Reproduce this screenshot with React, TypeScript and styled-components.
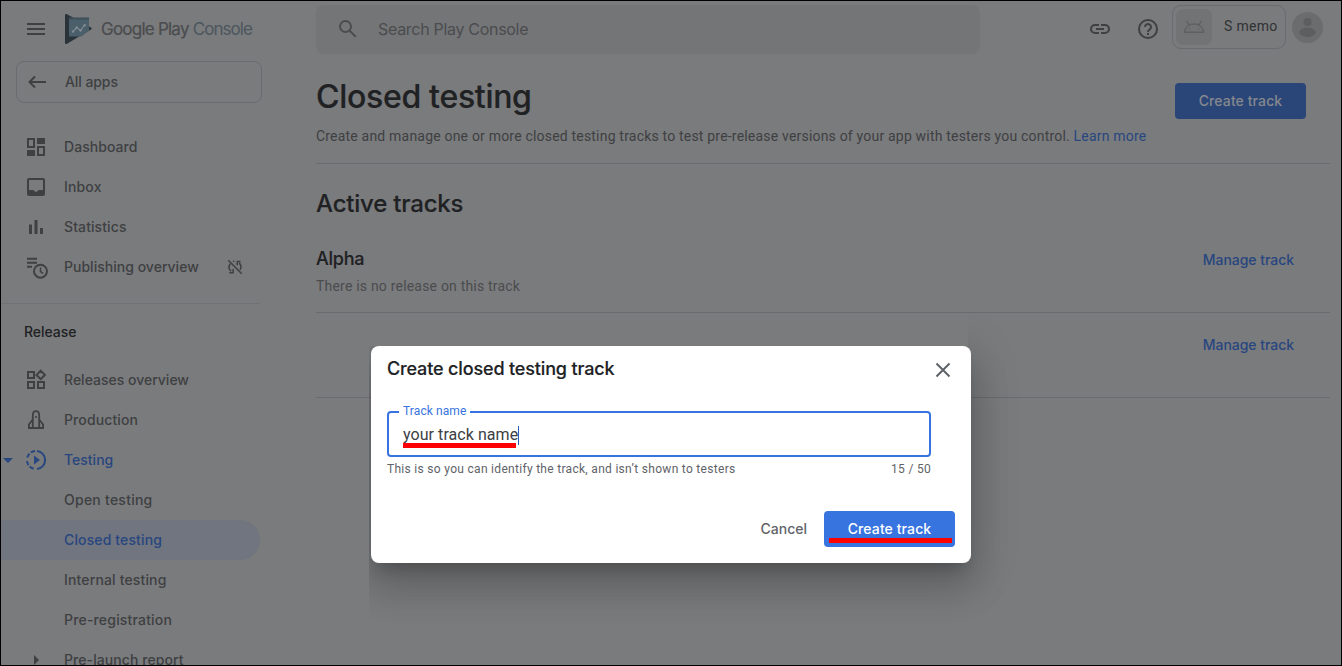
import React from "react";
import styled, { createGlobalStyle, ThemeProvider } from "styled-components";

const theme = {
  page: "#7a7b7d",
  field: "#747577",
  line: "#6a6b6e",
  text: "#3e4042",
  muted: "#4a4c4e",
  ink: "#202123",
  blue: "#28467f",
  button: "#2a4678",
  selected: "#71757f",
  accent: "#3774e0",
};

const sans = `Inter, "Liberation Sans", sans-serif`;
const roboto = `Roboto, "Liberation Sans", sans-serif`;

const GlobalStyle = createGlobalStyle`
  *, *::before, *::after { box-sizing: border-box; }
  body { margin: 0; }
  button { border: 0; padding: 0; background: none; }
  h1, h2, h3, p { margin: 0; }
`;

const Frame = styled.div`
  position: relative;
  display: flex;
  width: 1342px;
  height: 666px;
  overflow: hidden;
  border: 1px solid #000;
  background: ${(p) => p.theme.page};
  color: ${(p) => p.theme.text};
  font: 500 14px/20px ${sans};
  white-space: nowrap;
`;

/* Sidebar */
const Sidebar = styled.aside`
  display: flex;
  flex-direction: column;
  flex: none;
  width: 315px;
`;

const Brand = styled.div`
  display: flex;
  align-items: center;
  flex: none;
  height: 56px;
  padding-left: 23px;
  svg { flex: none; }
`;

const Logo = styled.svg`
  margin: 0 9px 0 16px;
`;

const BrandName = styled.span`
  font-weight: 400;
  font-size: 17px;
  letter-spacing: -0.77px;
  color: #4a4c4e;
  -webkit-text-stroke: 0.2px;
`;

const BrandSuffix = styled.span`
  margin-left: 4px;
  letter-spacing: -0.95px;
  color: #4c565d;
  -webkit-text-stroke: 0;
`;

const AllApps = styled.button`
  display: flex;
  align-items: center;
  flex: none;
  gap: 15px;
  width: 246px;
  height: 42px;
  margin: 4px 0 24px 15px;
  padding-left: 9px;
  border: 1px solid ${(p) => p.theme.line};
  border-radius: 8px;
  color: ${(p) => p.theme.text};
  font: 500 14px/20px ${sans};
  letter-spacing: -0.08px;
`;

const NavItem = styled.a<{ $tone?: "blue"; $selected?: boolean; $spacing?: number }>`
  display: flex;
  align-items: center;
  flex: none;
  width: 259px;
  height: 40px;
  border-radius: 0 20px 20px 0;
  background: ${(p) => (p.$selected ? p.theme.selected : "transparent")};
  color: ${(p) => (p.$tone === "blue" ? p.theme.blue : p.theme.text)};
  letter-spacing: ${(p) => p.$spacing ?? 0.1}px;
`;

const Caret = styled.span`
  display: flex;
  width: 14px;
  justify-content: center;
`;

const IconSlot = styled.span`
  display: flex;
  width: 42px;
  align-items: center;
  justify-content: center;
  margin-right: 7px;
`;

const Trailing = styled.span`
  display: flex;
  margin-left: auto;
  margin-right: 16px;
`;

const NavDivider = styled.div`
  flex: none;
  width: 259px;
  height: 1px;
  margin: 16px 0 18px;
  background: #707174;
`;

const NavHeading = styled.h3`
  flex: none;
  height: 38px;
  padding-left: 23px;
  color: ${(p) => p.theme.ink};
  font: 500 14px/20px ${sans};
  letter-spacing: -0.05px;
`;

/* Main column */
const Main = styled.main`
  display: flex;
  flex-direction: column;
  flex: none;
  width: 1014px;
`;

const TopBar = styled.header`
  display: flex;
  flex: none;
  height: 53px;
  padding-top: 4px;
`;

const SearchBox = styled.div`
  display: flex;
  align-items: center;
  gap: 18px;
  width: 664px;
  height: 49px;
  padding: 0 0 2px 20px;
  border-radius: 8px;
  background: ${(p) => p.theme.field};
  color: ${(p) => p.theme.muted};
  font: 400 16px/24px ${sans};
  letter-spacing: -0.3px;
`;

const Actions = styled.div`
  display: flex;
  height: 44px;
  margin-left: auto;
  align-items: center;
`;

const ActionIcon = styled.span`
  display: flex;
  width: 48px;
  justify-content: center;
  padding-top: 4px;
`;

const AppChip = styled.div`
  display: flex;
  align-items: center;
  width: 114px;
  height: 44px;
  padding-left: 3px;
  border: 1px solid ${(p) => p.theme.line};
  border-radius: 9px;
  color: #303234;
  font: 400 14px/20px ${roboto};
  letter-spacing: 0.3px;
`;

const AppTile = styled.span`
  display: flex;
  align-items: center;
  justify-content: center;
  width: 36px;
  height: 36px;
  margin-right: 12px;
  border-radius: 7px;
  background: #727375;
`;

const AppName = styled.span`
  padding-bottom: 2px;
`;

const Avatar = styled.svg`
  margin: 0 7px 0 6px;
`;

const PageHead = styled.section`
  display: flex;
  align-items: flex-start;
  justify-content: space-between;
  flex: none;
  height: 110px;
  padding: 20px 24px 0 0;
  border-bottom: 1px solid ${(p) => p.theme.line};
`;

const Title = styled.h1`
  padding-top: 1px;
  color: ${(p) => p.theme.ink};
  font: 500 32px/44px ${sans};
  letter-spacing: -0.3px;
  -webkit-text-stroke: 0.2px;
`;

const Description = styled.p`
  margin-top: 7px;
  color: ${(p) => p.theme.text};
  font: 400 14px/20px ${roboto};
  letter-spacing: 0.196px;
`;

const Link = styled.a`
  color: ${(p) => p.theme.blue};
`;

const PrimaryButton = styled.button<{ $dimmed?: boolean }>`
  display: flex;
  align-items: center;
  justify-content: center;
  position: relative;
  width: 131px;
  height: 36px;
  margin-top: ${(p) => (p.$dimmed ? 9 : 0)}px;
  border-radius: 4px;
  background: ${(p) => (p.$dimmed ? p.theme.button : p.theme.accent)};
  color: ${(p) => (p.$dimmed ? "#85888d" : "#fff")};
  font: 500 14px/20px ${sans};
  letter-spacing: 0.1px;
`;

const SectionTitle = styled.h2`
  flex: none;
  padding: 22px 0 19px;
  color: ${(p) => p.theme.ink};
  font: 500 24px/36px ${sans};
  letter-spacing: -0.2px;
  -webkit-text-stroke: 0.15px;
`;

const TrackRow = styled.article<{ $height: number; $top: number }>`
  display: flex;
  justify-content: space-between;
  flex: none;
  height: ${(p) => p.$height}px;
  padding: ${(p) => p.$top}px 36px 0 0;
  border-bottom: 1px solid ${(p) => p.theme.line};
`;

const TrackName = styled.h3`
  color: ${(p) => p.theme.ink};
  font: 500 18px/24px ${sans};
  letter-spacing: -0.25px;
  -webkit-text-stroke: 0.15px;
`;

const TrackStatus = styled.p`
  margin-top: 5px;
  color: ${(p) => p.theme.muted};
  font: 400 14px/20px ${roboto};
  letter-spacing: 0.2px;
`;

const ManageLink = styled.a`
  margin-left: auto;
  height: 20px;
  margin-top: 3px;
  color: ${(p) => p.theme.blue};
  letter-spacing: -0.04px;
`;

/* Dialog */
const DialogLayer = styled.div`
  position: absolute;
  left: 370px;
  top: 345px;
  clip-path: polygon(-2px 0, 597px 0, 597px -60px, 690px -60px, 690px 310px, -2px 310px);
`;

const Dialog = styled.div`
  display: flex;
  flex-direction: column;
  width: 600px;
  height: 217px;
  padding: 10px 16px 16px;
  border-radius: 8px;
  background: #fff;
  color: #5f6368;
  box-shadow: 0 11px 15px -7px rgba(0, 0, 0, 0.2), 0 24px 38px 3px rgba(0, 0, 0, 0.14),
    0 9px 46px 8px rgba(0, 0, 0, 0.12);
`;

const DialogHead = styled.div`
  display: flex;
  justify-content: space-between;
  height: 55px;
  svg { margin: 2px 0 0; }
`;

const DialogTitle = styled.h2`
  color: #202124;
  font: 500 18px/26px ${sans};
  letter-spacing: -0.15px;
  -webkit-text-stroke: 0.15px;
`;

const Field = styled.div`
  position: relative;
  display: flex;
  align-items: center;
  flex: none;
  width: 544px;
  height: 46px;
  padding: 2px 0 0 14px;
  border: 2px solid ${(p) => p.theme.accent};
  border-radius: 4px;
  color: #3c4043;
  font: 400 16px/24px ${roboto};
  letter-spacing: 0.06px;
`;

const FieldLabel = styled.label`
  position: absolute;
  left: 10px;
  top: -9px;
  padding: 0 4px;
  background: #fff;
  color: ${(p) => p.theme.accent};
  font: 400 12px/14px ${roboto};
  letter-spacing: 0.1px;
`;

const TextCursor = styled.span`
  width: 1px;
  height: 19px;
  background: #2a5cb8;
`;

const RedMark = styled.span<{ $left: number; $bottom: number; $width: number }>`
  position: absolute;
  left: ${(p) => p.$left}px;
  bottom: ${(p) => p.$bottom}px;
  width: ${(p) => p.$width}px;
  height: 5px;
  background: #f00;
`;

const Hint = styled.div`
  display: flex;
  justify-content: space-between;
  width: 544px;
  margin-top: 4px;
  font: 400 12px/16px ${roboto};
  letter-spacing: 0.3px;
`;

const DialogFoot = styled.div`
  display: flex;
  align-items: center;
  justify-content: flex-end;
  gap: 17px;
  margin-top: auto;
`;

const CancelButton = styled.button`
  color: #5f6368;
  font: 500 14px/20px ${sans};
`;

/* Icons */
type StrokeProps = { size?: number; w?: number; children: React.ReactNode };
const Stroke = ({ size = 24, w = 2, children }: StrokeProps) => (
  <svg width={size} height={size} viewBox="0 0 24 24" fill="none" stroke="currentColor" strokeWidth={w}>
    {children}
  </svg>
);

const MenuIcon = () => <Stroke><path d="M3 7h18M3 12h18M3 17h18" /></Stroke>;
const BackIcon = () => <Stroke><path d="M20 12H3M9 6.500L3.500 12 9 17.500" /></Stroke>;
const DashboardIcon = () => (
  <Stroke>
    <path d="M4 4h6v8H4zM14 12h6v8h-6z" />
    <path d="M13 3h8v6h-8zM3 15h8v6H3z" fill="currentColor" stroke="none" />
  </Stroke>
);
const InboxIcon = () => (
  <Stroke>
    <rect x="4" y="4" width="16" height="16" rx="1" />
    <path d="M4 15h5.500c.5 1.200 1.400 1.800 2.500 1.800s2-.6 2.500-1.800H20v5H4z" fill="currentColor" stroke="none" />
  </Stroke>
);
const StatsIcon = () => (
  <Stroke w={3}><path d="M6.500 19V9.500M12 19V5M17.500 19v-6" /></Stroke>
);
const PublishIcon = () => (
  <Stroke>
    <path d="M3 3.700h10M3 7.700h10M3 11.700h5" />
    <circle cx="16.500" cy="16.200" r="6.500" />
    <path d="M16.500 12.500v4l2.600 1.800" strokeWidth="1.500" />
  </Stroke>
);
const SyncOffIcon = () => (
  <Stroke size={18}>
    <path d="M3 3l18 18M5.600 7.500a8 8 0 0 0 1.200 10.200M9.500 4.600l1.500-.6M4.500 19.500H9.500v-5M19.500 4.500H15v5M17.500 6.500a8 8 0 0 1 1.300 9.500" />
  </Stroke>
);
const ReleasesIcon = () => (
  <Stroke><path d="M4 4h6v6H4zM4 14h6v6H4zM14 14h6v6h-6zM16.700 2.700l4.200 4.200-4.200 4.200-4.200-4.200z" /></Stroke>
);
const ProductionIcon = () => (
  <Stroke w={1.800}>
    <path d="M8.800 20V7.500C8.800 5 10.200 3.200 12 3.200S15.200 5 15.200 7.500V20" />
    <path d="M8.800 11.500L4.900 16.500V20h14.200v-3.500l-3.900-5" />
    <circle cx="12" cy="9" r="1" fill="currentColor" stroke="none" />
  </Stroke>
);
const TestingIcon = () => (
  <Stroke>
    <path d="M13 3a9.050 9.050 0 0 1 0 18" />
    <path d="M11 3A9.100 9.100 0 0 0 3 11M3 13a9.100 9.100 0 0 0 8 8" strokeDasharray="4.400 1.700" />
    <path d="M10 7.500v9l6-4.500z" fill="currentColor" stroke="none" />
  </Stroke>
);
const SearchIcon = () => (
  <Stroke><circle cx="9.500" cy="9.500" r="5.500" /><path d="M13.700 13.700l6 6" /></Stroke>
);
const LinkIcon = () => (
  <Stroke><path d="M11 8H7a4 4 0 0 0 0 8h4M13 8h4a4 4 0 0 1 0 8h-4M8 12h8" /></Stroke>
);
const HelpIcon = () => (
  <Stroke>
    <circle cx="12" cy="12" r="9" />
    <path d="M9 10a3 3 0 1 1 4.800 2.400C12.600 13.300 12 13.700 12 15M12 16v2" />
  </Stroke>
);
const CloseIcon = () => <Stroke><path d="M5.500 5.500l13 13M18.500 5.500l-13 13" /></Stroke>;
const AndroidIcon = () => (
  <svg width="22" height="14" viewBox="0 0 22 14" fill="none" stroke="#5e6062" strokeWidth="1.400">
    <path d="M1.500 12.300C2 7 6 4 11 4s9 3 9.500 8.300zM6 5L3.700 1M16 5l2.300-4" />
    <circle cx="6.500" cy="9" r=".8" fill="#5e6062" stroke="none" />
    <circle cx="15.500" cy="9" r=".8" fill="#5e6062" stroke="none" />
  </svg>
);
const DownCaret = () => (
  <svg width="10" height="5" viewBox="0 0 10 5"><path d="M0 0h10L5 5z" fill="currentColor" /></svg>
);
const RightCaret = () => (
  <svg width="5" height="10" viewBox="0 0 5 10"><path d="M0 0v10l5-5z" fill="currentColor" /></svg>
);
const PlayLogo = () => (
  <Logo width="28" height="32" viewBox="0 0 28 32">
    <path d="M1 2.200C1 1.100 2 .8 3 1.300L27 14.500c1 .6 1 1.400 0 2L3 30.800c-1 .5-2 .1-2-.9z" fill="#2b333a" />
    <path d="M5 5h20v12.700L17.300 23.500H5z" fill="#4b5f6b" />
    <path d="M5 4.500h20v2H5z" fill="#3d4f5a" />
    <path d="M9 18.500l3.700-4 3.800 3 4-5.500" fill="none" stroke="#7f8b92" strokeWidth="1.200" />
    <g fill="#7f8b92">
      <circle cx="9" cy="18.500" r="1.200" /><circle cx="12.700" cy="14.500" r="1.200" />
      <circle cx="16.500" cy="17.500" r="1.200" /><circle cx="20.700" cy="12.200" r="1.200" />
    </g>
  </Logo>
);

type NavProps = {
  label: string;
  icon?: React.ReactNode;
  caret?: React.ReactNode;
  trailing?: React.ReactNode;
  tone?: "blue";
  selected?: boolean;
  spacing?: number;
};
const Nav = ({ label, icon, caret, trailing, tone, selected, spacing }: NavProps) => (
  <NavItem $tone={tone} $selected={selected} $spacing={spacing}>
    <Caret>{caret}</Caret>
    <IconSlot>{icon}</IconSlot>
    {label}
    {trailing && <Trailing>{trailing}</Trailing>}
  </NavItem>
);

export default function App() {
  return (
    <ThemeProvider theme={theme}>
      <GlobalStyle />
      <Frame>
        <Sidebar>
          <Brand>
            <MenuIcon />
            <PlayLogo />
            <BrandName>Google Play<BrandSuffix>Console</BrandSuffix></BrandName>
          </Brand>
          <AllApps><BackIcon />All apps</AllApps>
          <Nav label="Dashboard" icon={<DashboardIcon />} spacing={0.05} />
          <Nav label="Inbox" icon={<InboxIcon />} spacing={0.15} />
          <Nav label="Statistics" icon={<StatsIcon />} />
          <Nav label="Publishing overview" icon={<PublishIcon />} trailing={<SyncOffIcon />} spacing={0.02} />
          <NavDivider />
          <NavHeading>Release</NavHeading>
          <Nav label="Releases overview" icon={<ReleasesIcon />} spacing={0} />
          <Nav label="Production" icon={<ProductionIcon />} spacing={0.12} />
          <Nav label="Testing" icon={<TestingIcon />} caret={<DownCaret />} tone="blue" spacing={0.01} />
          <Nav label="Open testing" spacing={0.25} />
          <Nav label="Closed testing" tone="blue" selected spacing={0.13} />
          <Nav label="Internal testing" spacing={0.15} />
          <Nav label="Pre-registration" spacing={0.18} />
          <Nav label="Pre-launch report" icon={<RightCaret />} spacing={0.08} />
        </Sidebar>
        <Main>
          <TopBar>
            <SearchBox><SearchIcon />Search Play Console</SearchBox>
            <Actions>
              <ActionIcon><LinkIcon /></ActionIcon>
              <ActionIcon><HelpIcon /></ActionIcon>
              <AppChip><AppTile><AndroidIcon /></AppTile><AppName>S memo</AppName></AppChip>
              <Avatar width="31" height="31" viewBox="0 0 31 31">
                <circle cx="15.500" cy="15.500" r="15.500" fill="#6b6c6e" />
                <circle cx="15.500" cy="10" r="4" fill="#5c5e60" />
                <ellipse cx="15.500" cy="20.300" rx="8.200" ry="4.600" fill="#5c5e60" />
              </Avatar>
            </Actions>
          </TopBar>
          <PageHead>
            <div>
              <Title>Closed testing</Title>
              <Description>
                Create and manage one or more closed testing tracks to test pre-release versions of your app with
                testers you control. <Link>Learn more</Link>
              </Description>
            </div>
            <PrimaryButton $dimmed>Create track</PrimaryButton>
          </PageHead>
          <SectionTitle>Active tracks</SectionTitle>
          <TrackRow $height={72} $top={6}>
            <div>
              <TrackName>Alpha</TrackName>
              <TrackStatus>There is no release on this track</TrackStatus>
            </div>
            <ManageLink>Manage track</ManageLink>
          </TrackRow>
          <TrackRow $height={85} $top={19}>
            <ManageLink>Manage track</ManageLink>
          </TrackRow>
        </Main>
        <DialogLayer>
          <Dialog>
            <DialogHead>
              <DialogTitle>Create closed testing track</DialogTitle>
              <CloseIcon />
            </DialogHead>
            <Field>
              <FieldLabel>Track name</FieldLabel>
              your track name
              <TextCursor />
              <RedMark $left={14} $bottom={7} $width={113} />
            </Field>
            <Hint><span>This is so you can identify the track, and isn’t shown to testers</span><span>15 / 50</span></Hint>
            <DialogFoot>
              <CancelButton>Cancel</CancelButton>
              <PrimaryButton>
                Create track
                <RedMark $left={5} $bottom={4} $width={123} />
              </PrimaryButton>
            </DialogFoot>
          </Dialog>
        </DialogLayer>
      </Frame>
    </ThemeProvider>
  );
}
